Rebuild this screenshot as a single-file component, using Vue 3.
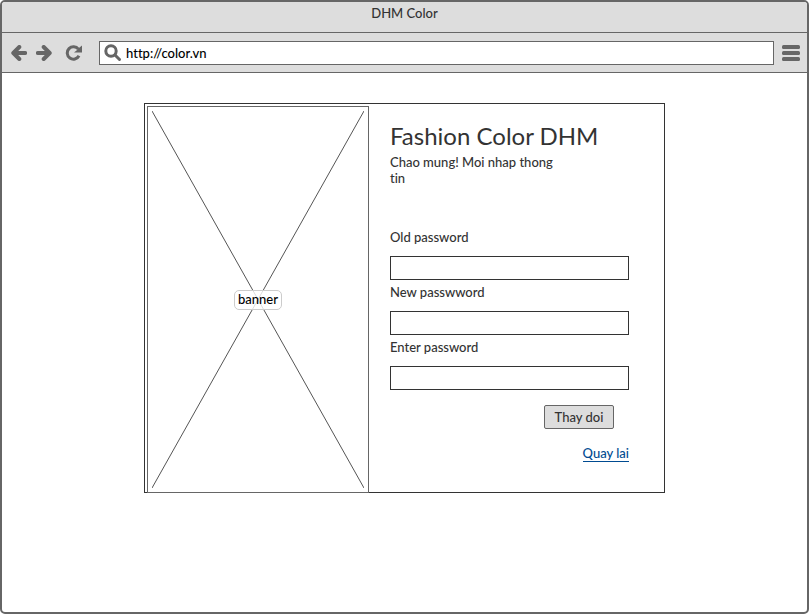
<script setup>
import { ref } from 'vue'

const address = ref('http://color.vn')
const fields = ref([
  { id: 'old-password', label: 'Old password', value: '' },
  { id: 'new-password', label: 'New passwword', value: '' },
  { id: 'enter-password', label: 'Enter password', value: '' },
])
</script>

<template>
  <div class="window">
    <header class="title-bar">DHM Color</header>
    <nav class="toolbar">
      <button class="tool back" type="button" aria-label="Back">
        <svg width="16" height="16" viewBox="0 0 16 16">
          <path d="M8.300 2 2.300 8l6 6M3 8h11.200" />
        </svg>
      </button>
      <button class="tool forward" type="button" aria-label="Forward">
        <svg width="16" height="16" viewBox="0 0 16 16">
          <path d="M7.700 2l6 6-6 6M13 8H1.800" />
        </svg>
      </button>
      <button class="tool reload" type="button" aria-label="Reload">
        <svg width="18" height="16" viewBox="0 0 18 16">
          <path class="arc" d="M13.400 4.200A6.200 6.200 0 1 0 14 10.800" />
          <path class="head" d="M17 0.500V7.500H9L11.500 5.500 14.500 2.500Z" />
        </svg>
      </button>
      <div class="address">
        <svg width="18" height="18" viewBox="0 0 18 18" aria-hidden="true">
          <circle cx="7" cy="7" r="5.200" />
          <path d="M11 11 15.500 15.500" />
        </svg>
        <input v-model="address" type="text" aria-label="Address" />
      </div>
      <button class="tool menu" type="button" aria-label="Menu">
        <svg width="18" height="16" viewBox="0 0 18 16">
          <rect width="18" height="4" rx="1.500" />
          <rect y="6" width="18" height="4" rx="1.500" />
          <rect y="12" width="18" height="4" rx="1.500" />
        </svg>
      </button>
    </nav>

    <main class="page">
      <section class="card">
        <div class="banner">
          <svg class="cross" viewBox="0 0 212 377" preserveAspectRatio="none" aria-hidden="true">
            <path d="M0 0 212 377M212 0 0 377" />
          </svg>
          <span class="banner-label">banner</span>
        </div>
        <form class="form" @submit.prevent>
          <h1>Fashion Color DHM</h1>
          <p>Chao mung! Moi nhap thong tin</p>
          <div class="fields">
            <div v-for="field in fields" :key="field.id" class="field">
              <label :for="field.id">{{ field.label }}</label>
              <input :id="field.id" v-model="field.value" type="password" />
            </div>
          </div>
          <button class="submit" type="submit">Thay doi</button>
          <a class="return" href="#">Quay lai</a>
        </form>
      </section>
    </main>
  </div>
</template>

<style>
html,
body,
#app {
  height: 100%;
}

body {
  margin: 0;
}
</style>

<style scoped>
.window,
.window * {
  box-sizing: border-box;
}

.window {
  display: flex;
  flex-direction: column;
  min-height: 100%;
  border: 2px solid #666;
  border-radius: 5px;
  background: #fff;
  overflow: hidden;
  color: #333;
  font: 500 13px/16px Lato, "Liberation Sans", sans-serif;
  font-variant-ligatures: none;
}

button,
input {
  margin: 0;
  padding: 0;
  color: inherit;
  font: inherit;
}

.title-bar {
  height: 31px;
  padding-top: 3px;
  border-bottom: 1px solid #666;
  background: #ddd;
  text-align: center;
}

.toolbar {
  display: flex;
  align-items: center;
  height: 40px;
  padding: 0 7px 0 9px;
  border-bottom: 1px solid #666;
  background: #ddd;
}

.tool {
  display: flex;
  border: 0;
  background: none;
}

.tool path {
  fill: none;
  stroke: #666;
  stroke-width: 4;
  stroke-linecap: round;
  stroke-linejoin: round;
}

.tool .arc {
  stroke-width: 3;
  stroke-linecap: butt;
}

.tool .head,
.tool rect {
  fill: #666;
  stroke: none;
}

.forward {
  margin-left: 9px;
}

.reload {
  margin-left: 13px;
}

.address {
  display: flex;
  flex: 1;
  align-items: center;
  gap: 4px;
  height: 24px;
  margin: 0 8px 0 16px;
  padding-left: 4px;
  border: 1px solid #666;
  background: #fff;
}

.address svg {
  fill: none;
  stroke: #666;
  stroke-width: 3;
  stroke-linecap: round;
}

.address input {
  flex: 1;
  min-width: 0;
  border: 0;
  outline: 0;
  background: none;
  color: #000;
}

.page {
  display: flex;
  justify-content: center;
  padding: 30px 24px;
}

.card {
  display: flex;
  width: 100%;
  max-width: 521px;
  border: 1px solid #333;
}

.banner {
  display: grid;
  flex: 0 0 222px;
  place-items: center;
  margin: 2px 0 -1px 2px;
  padding: 4px;
  border: 1px solid #666;
}

.cross {
  grid-area: 1 / 1;
  width: 100%;
  height: 377px;
  stroke: #555;
  stroke-width: 1;
}

.banner-label {
  z-index: 1;
  grid-area: 1 / 1;
  padding: 0 3px 2px;
  border: 1px solid #ccc;
  border-radius: 5px;
  background: rgba(255, 255, 255, 0.8);
  color: #000;
}

.form {
  display: flex;
  flex: 1;
  flex-direction: column;
  min-width: 0;
  padding: 18px 35px 28px 21px;
}

h1 {
  margin: 0 0 4px;
  font-size: 24px;
  font-weight: 400;
  line-height: 28px;
}

p {
  max-width: 176px;
  margin: 0 0 43px;
}

.fields {
  display: flex;
  flex-direction: column;
  gap: 4px;
}

.field {
  display: flex;
  flex-direction: column;
  gap: 11px;
}

.field label {
  align-self: flex-start;
}

.field input {
  width: 100%;
  height: 24px;
  padding: 0 5px;
  border: 1px solid #333;
  border-radius: 0;
  background: #fff;
}

.submit {
  align-self: flex-end;
  width: 70px;
  height: 24px;
  margin: 15px 15px 0 0;
  border: 1px solid #666;
  border-radius: 2px;
  background: #ddd;
}

.return {
  align-self: flex-end;
  margin-top: 16px;
  border-bottom: 1px solid #004b91;
  color: #004b91;
  line-height: 16px;
  text-decoration: none;
}
</style>
